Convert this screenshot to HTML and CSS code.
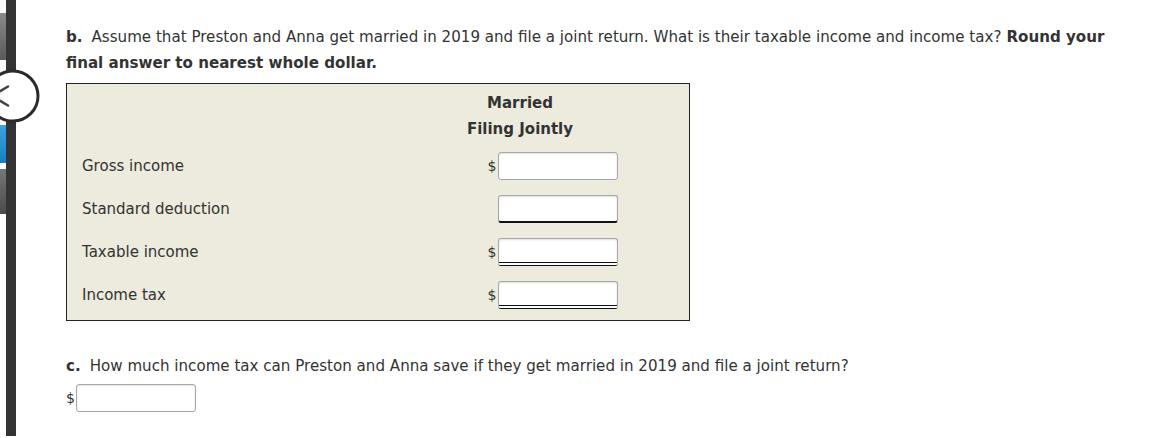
FILE: index.html
```html
<!DOCTYPE html>
<html>
<head>
<meta charset="utf-8">
<link rel="stylesheet" href="styles.css">
</head>
<body>
<div class="page">
  <aside class="side">
    <div class="strip">
      <span class="seg seg-white1"></span>
      <span class="seg seg-grey"></span>
      <span class="seg seg-white2"></span>
      <span class="seg seg-blue"></span>
      <span class="seg seg-grey2"></span>
    </div>
    <div class="rail"></div>
    <div class="back">
      <svg width="54" height="54" viewBox="0 0 54 54"><circle cx="27" cy="27" r="25" fill="#fff" stroke="#2b2b2b" stroke-width="3"/><path d="M22 17.5 L6 27 L22 36.5" fill="none" stroke="#444" stroke-width="2.6" stroke-linecap="round" stroke-linejoin="round"/></svg>
    </div>
  </aside>
  <main class="main">
    <div class="q">
      <div class="qline"><b class="tag">b.</b><span>Assume that Preston and Anna get married in 2019 and file a joint return. What is their taxable income and income tax?</span><b class="strong">Round your</b></div>
      <div class="qline"><b>final answer to nearest whole dollar.</b></div>
    </div>
    <div class="box">
      <div class="grid">
        <div class="hdr-l"></div>
        <div class="hdr"><div>Married</div><div>Filing Jointly</div></div>

        <div class="lbl">Gross income</div>
        <div class="cell"><span class="dol">$</span><span class="inp"></span></div>

        <div class="lbl">Standard deduction</div>
        <div class="cell"><span class="dol"></span><span class="inp single"></span></div>

        <div class="lbl">Taxable income</div>
        <div class="cell"><span class="dol">$</span><span class="inp dbl"></span></div>

        <div class="lbl">Income tax</div>
        <div class="cell"><span class="dol">$</span><span class="inp dbl"></span></div>
      </div>
    </div>
    <div class="q qc">
      <div class="qline"><b class="tag">c.</b><span>How much income tax can Preston and Anna save if they get married in 2019 and file a joint return?</span></div>
    </div>
    <div class="cline"><span class="dol">$</span><span class="inp"></span></div>
  </main>
</div>
</body>
</html>
```
FILE: styles.css
```css
html, body {
  margin: 0;
  padding: 0;
  background: #fff;
}
body {
  font-family: "DejaVu Sans", Verdana, sans-serif;
  color: #333;
  font-size: 15px;
}
.page {
  display: flex;
  height: 438px;
  overflow: hidden;
}
.side {
  position: relative;
  width: 16px;
  flex: none;
  display: flex;
}
.strip {
  width: 6px;
  display: flex;
  flex-direction: column;
}
.seg { display: block; width: 6px; }
.seg-white1 { height: 13px; background: #fafafa; }
.seg-grey { height: 47px; background: linear-gradient(#8a8a8a, #5a5a5a); }
.seg-white2 { height: 65px; background: #fafafa; }
.seg-blue { height: 38px; background: linear-gradient(#3fa3dd, #1a7fc0); }
.seg-grey2 { height: 45px; margin-top: 6px; background: linear-gradient(#777, #4a4a4a); }
.rail {
  width: 10px;
  background: #333;
  height: 436px;
}
.back {
  position: absolute;
  left: -14px;
  top: 69px;
  width: 54px;
  height: 54px;
}
.back svg { display: block; }
.main {
  padding-left: 50px;
  width: 1056px;
}
.q {
  margin: 24px 0 0 0;
  font-size: 15.1px;
  line-height: 26px;
}
.qline {
  display: flex;
  white-space: nowrap;
}
.q b { font-weight: bold; }
.tag { margin-right: 9px; }
.strong { margin-left: 5px; }
.box {
  margin-top: 7px;
  width: 622px;
  border: 1px solid #222;
  background: #ecebdd;
  padding: 6px 0 11px 0;
}
.grid {
  display: grid;
  grid-template-columns: 343px 220px;
  grid-template-rows: 47px repeat(4, 28px);
  row-gap: 15px;
  align-items: center;
}
.hdr {
  align-self: start;
  text-align: center;
  font-weight: bold;
  font-size: 15px;
  line-height: 26px;
  height: 47px;
}
.lbl {
  padding-left: 15px;
  font-size: 15px;
}
.cell {
  display: flex;
  align-items: center;
  justify-content: flex-end;
  padding-right: 12px;
}
.dol {
  width: 12px;
  text-align: center;
  font-size: 14px;
  color: #333;
}
.inp {
  display: block;
  width: 118px;
  height: 26px;
  background: #fff;
  border: 1px solid #a6a6a6;
  border-radius: 3px;
  box-shadow: inset 0 1px 2px rgba(0,0,0,0.12);
}
.inp.single { border-bottom: 2px solid #111; height: 25px; }
.inp.dbl { border-bottom: 4px double #111; height: 23px; }
.qc { margin-top: 32px; }
.cline {
  display: flex;
  align-items: center;
  margin-top: 5px;
}
.cline .dol { width: 10px; text-align: left; }
```
